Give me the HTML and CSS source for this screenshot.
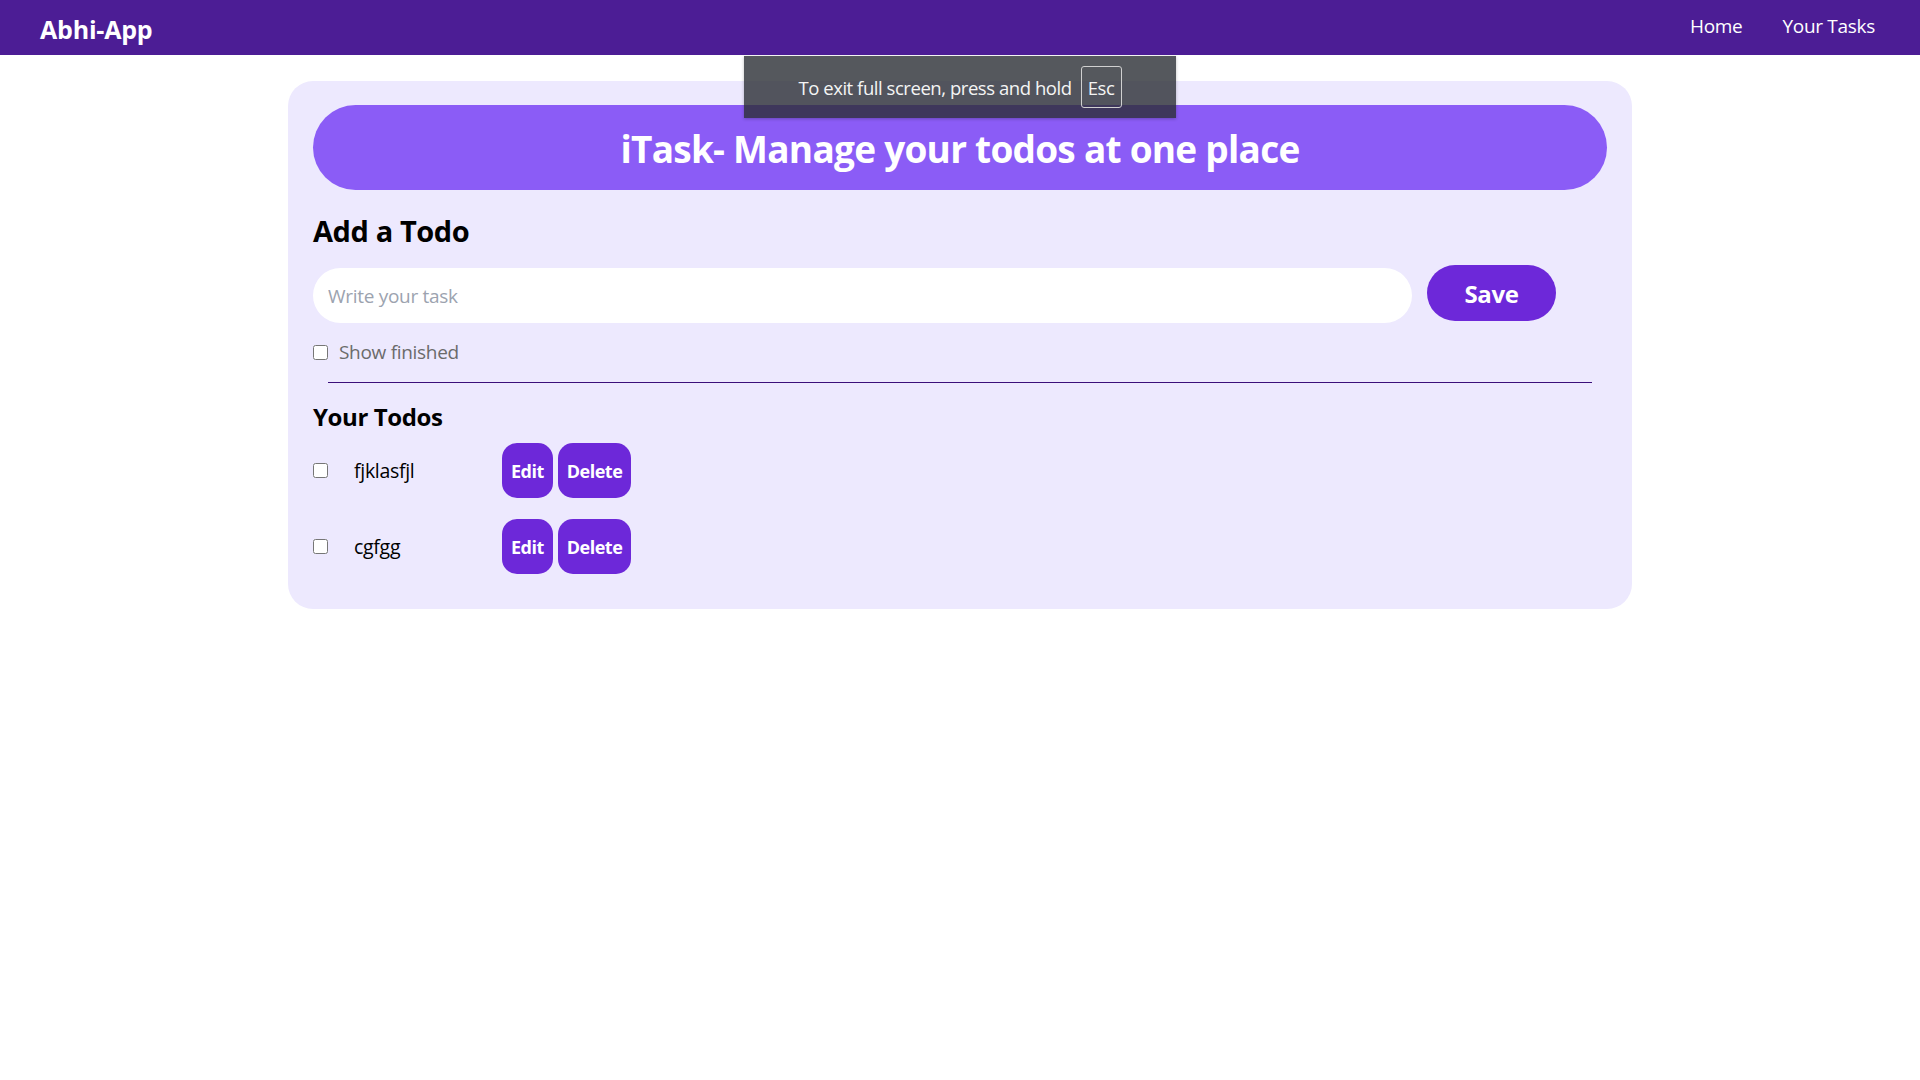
FILE: index.html
```html
<!DOCTYPE html>
<html lang="en">
<head>
<meta charset="utf-8">
<title>iTask</title>
<link rel="stylesheet" href="styles.css">
</head>
<body>
<nav class="navbar">
  <div class="logo">Abhi-App</div>
  <ul class="nav-links">
    <li>Home</li>
    <li>Your Tasks</li>
  </ul>
</nav>

<div class="fs-toast">
  <span class="fs-text">To exit full screen, press and hold</span>
  <span class="fs-key">Esc</span>
</div>

<main class="card">
  <h1 class="title">iTask- Manage your todos at one place</h1>
  <h2 class="add-heading">Add a Todo</h2>
  <div class="add-row">
    <input class="task-input" type="text" placeholder="Write your task">
    <button class="save-btn">Save</button>
  </div>
  <label class="show-finished">
    <input class="check" type="checkbox">
    <span>Show finished</span>
  </label>
  <div class="divider"></div>
  <h3 class="todos-heading">Your Todos</h3>
  <div class="todos">
    <div class="todo">
      <div class="todo-left">
        <input class="check" type="checkbox">
        <span class="todo-text">fjklasfjl</span>
      </div>
      <div class="todo-actions">
        <button class="small-btn">Edit</button>
        <button class="small-btn">Delete</button>
      </div>
    </div>
    <div class="todo">
      <div class="todo-left">
        <input class="check" type="checkbox">
        <span class="todo-text">cgfgg</span>
      </div>
      <div class="todo-actions">
        <button class="small-btn">Edit</button>
        <button class="small-btn">Delete</button>
      </div>
    </div>
  </div>
</main>
</body>
</html>
```

FILE: styles.css
```css
* { box-sizing: border-box; }

body {
  margin: 0;
  font-family: "Open Sans", "Noto Sans", sans-serif;
  background: #ffffff;
  color: #000;
  position: relative;
  min-height: 1080px;
}

.navbar {
  height: 55px;
  background: #4c1d95;
  color: #fff;
  display: flex;
  align-items: center;
  justify-content: space-between;
  padding: 0 45px 0 40px;
}

.logo {
  font-size: 25px;
  font-weight: 700;
  letter-spacing: -0.2px;
  margin-top: 2px;
}

.nav-links {
  list-style: none;
  margin: 0;
  padding: 0;
  display: flex;
  gap: 40px;
  font-size: 19px;
  letter-spacing: -0.3px;
  margin-top: -3px;
}

.fs-toast {
  position: absolute;
  top: 56px;
  left: 50%;
  transform: translateX(-50%);
  width: 432px;
  height: 62px;
  background: rgba(42, 46, 52, 0.8);
  color: #f4f4f4;
  display: flex;
  align-items: center;
  justify-content: center;
  gap: 9px;
  font-size: 18.5px;
  letter-spacing: -0.45px;
  box-shadow: 0 1px 3px rgba(0,0,0,0.25);
  z-index: 10;
}

.fs-key {
  width: 41px;
  height: 42px;
  border: 1px solid #d0d0d0;
  border-radius: 3px;
  display: flex;
  align-items: center;
  justify-content: center;
}

.card {
  width: 1344px;
  margin: 26px auto 0;
  background: #ede9fe;
  border-radius: 25px;
  padding: 24px 25px 35px;
}

.title {
  margin: 0;
  height: 85px;
  line-height: 87px;
  border-radius: 9999px;
  background: #8b5cf6;
  color: #fff;
  text-align: center;
  font-size: 37px;
  font-weight: 700;
  letter-spacing: -0.75px;
}

.add-heading {
  margin: 21px 0 0;
  font-size: 29px;
  line-height: 40px;
  font-weight: 700;
  letter-spacing: -0.4px;
}

.add-row {
  display: flex;
  align-items: flex-start;
  gap: 15px;
  margin-top: 14px;
}

.task-input {
  width: 1099px;
  height: 55px;
  margin-top: 3px;
  border: none;
  outline: none;
  border-radius: 9999px;
  background: #fff;
  padding: 0 15px;
  font-family: inherit;
  font-size: 19px;
  letter-spacing: -0.3px;
}

.task-input::placeholder { color: #9ca3af; }

.save-btn {
  width: 129px;
  height: 56px;
  border: none;
  border-radius: 9999px;
  background: #6d28d9;
  color: #fff;
  font-family: inherit;
  font-size: 24px;
  font-weight: 700;
  letter-spacing: -0.4px;
}

.show-finished {
  display: flex;
  align-items: center;
  gap: 11px;
  margin-top: 17px;
  height: 24px;
  color: #6b6b6b;
  font-size: 19px;
  letter-spacing: -0.3px;
}

.check {
  width: 15px;
  height: 15px;
  margin: 0;
  flex: none;
}

.divider {
  width: 1264px;
  margin: 18px auto 0;
  border-top: 1.5px solid #3b0f7a;
}

.todos-heading {
  margin: 16px 0 0;
  font-size: 24px;
  line-height: 35px;
  font-weight: 700;
  letter-spacing: -0.4px;
}

.todos {
  display: flex;
  flex-direction: column;
  gap: 21px;
  margin-top: 9px;
}

.todo {
  display: flex;
  align-items: center;
  height: 55px;
}

.todo-left {
  width: 189px;
  display: flex;
  align-items: center;
  gap: 26px;
}

.todo-text {
  font-size: 19.5px;
  letter-spacing: -0.3px;
}

.todo-actions {
  display: flex;
  gap: 5px;
}

.small-btn {
  height: 55px;
  padding: 0 9px;
  border: none;
  border-radius: 15px;
  background: #6d28d9;
  color: #fff;
  font-family: inherit;
  font-size: 18px;
  font-weight: 700;
  letter-spacing: -0.5px;
}
```
